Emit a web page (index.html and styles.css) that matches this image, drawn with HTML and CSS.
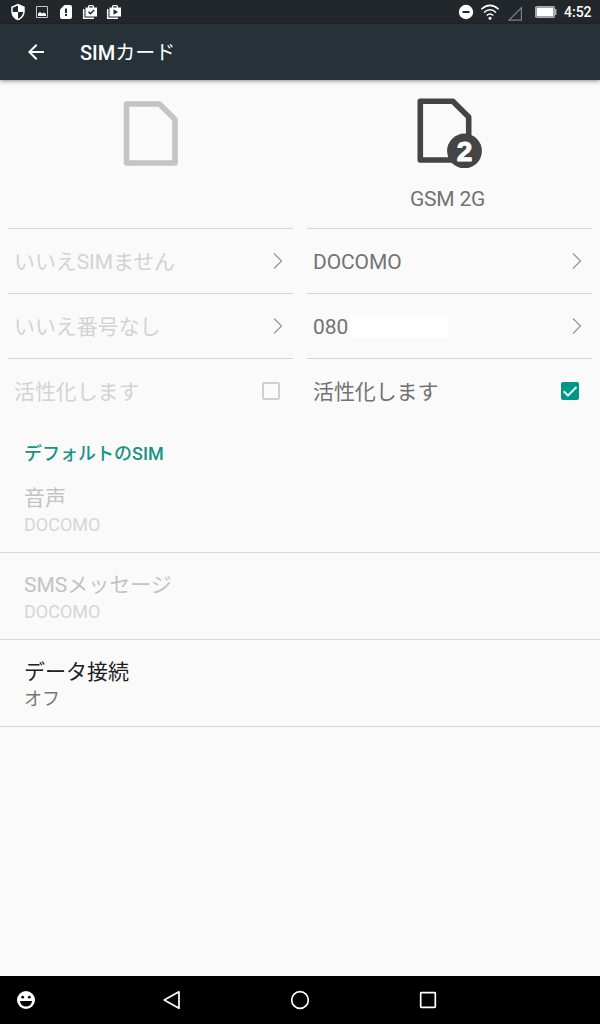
FILE: index.html
```html
<!DOCTYPE html>
<html lang="ja">
<head>
    <meta charset="UTF-8">
    <meta name="viewport" content="width=device-width, initial-scale=1.0">
    <title>SIMカード</title>
    <link rel="stylesheet" href="styles.css">
</head>
<body>
    <div class="status-bar">
        <div class="notifications">
            <svg width="18" height="18" viewBox="0 0 24 24"><path fill="#fff" d="M12 1L3 5v6c0 5.55 3.84 10.74 9 12 5.16-1.26 9-6.45 9-12V5l-9-4zm0 10.99h7c-.53 4.12-3.28 7.79-7 8.94V12H5V6.3l7-3.11v8.8z"/></svg>
            <svg width="14" height="14" viewBox="0 0 14 14"><path fill="none" stroke="#c4c8ca" d="M1.5 1.5h11v11h-11z"/><path fill="#fff" d="M3 11V8.500l2-1.500 2 1.500 2-1 2 1.500v2z"/></svg>
            <svg width="16" height="16" viewBox="0 0 16 16"><path fill="#fff" d="M6.500 1H12a2 2 0 0 1 2 2v10a2 2 0 0 1-2 2H4a2 2 0 0 1-2-2V5.500z"/><path fill="#21272b" d="M7 4.500h2V9H7zM7 10h2v2H7z"/></svg>
            <svg width="16" height="16" viewBox="0 0 16 16"><path fill="none" stroke="#fff" stroke-width="1.500" d="M1.700 5v9.300H12"/><path fill="#fff" fill-rule="evenodd" d="M3.500 3.500H6V2l1-1h4l1 1v1.500h3V12.500H3.500zM7.200 3.500h3.600V2.200H7.200z"/><path fill="none" stroke="#21272b" stroke-width="1.500" d="M6.500 7.700l2 2 3.700-3.700"/></svg>
            <svg width="16" height="16" viewBox="0 0 16 16"><path fill="none" stroke="#fff" stroke-width="1.500" d="M1.700 5v9.300H12"/><path fill="#fff" fill-rule="evenodd" d="M3.500 3.500H6V2l1-1h4l1 1v1.500h3V12.500H3.500zM7.200 3.500h3.600V2.200H7.200z"/><path fill="#21272b" d="M7.500 5.200v5.600L12 8z"/></svg>
        </div>
        <div class="system">
            <svg class="dnd" width="16" height="16" viewBox="0 0 16 16"><circle cx="8" cy="8" r="7.200" fill="#fff"/><path fill="#21272b" d="M4.500 7h7v2h-7z"/></svg>
            <svg class="wifi" width="20" height="17" viewBox="0 0 20 17"><g fill="none" stroke="#fff" stroke-width="1.500"><path d="M1.300 5.200Q10-2.500 18.700 5.200"/><path d="M4 8.500q6-5.400 12 0"/><path d="M6.700 11.500q3.300-3 6.600 0"/></g><circle cx="10" cy="14.300" r="1.500" fill="#fff"/></svg>
            <svg class="signal" width="16" height="16" viewBox="0 0 16 16"><path fill="none" stroke="#7d8284" stroke-width="1.200" d="M2 14.200h12.400V1.800z"/></svg>
            <svg class="battery" width="22" height="12" viewBox="0 0 22 12"><rect x=".6" y=".6" width="18.800" height="10.800" rx="1" fill="none" stroke="#a9adaf" stroke-width="1.200"/><path fill="#fff" d="M1.500 1.500h17v9h-17z"/><path fill="#a9adaf" d="M20 3h1.500v6H20z"/></svg>
            <span class="clock">4:52</span>
        </div>
    </div>

    <header class="app-bar">
        <svg width="24" height="24" viewBox="0 0 24 24"><path fill="#fff" d="M20 11H7.830l5.590-5.590L12 4l-8 8 8 8 1.410-1.410L7.830 13H20v-2z"/></svg>
        <h1>SIM<span class="kana">カード</span></h1>
    </header>

    <main>
        <div class="slots">
            <section class="slot disabled">
                <div class="slot-head">
                    <svg class="sim" width="70" height="76" viewBox="0 0 70 76"><path fill="none" stroke="#c4c4c4" stroke-width="5.600" stroke-linejoin="round" d="M10.500 9h33L59 24.400V68H10.500z"/></svg>
                </div>
                <div class="row">
                    <span class="label">いいえSIMません</span>
                    <svg class="chevron" width="10" height="18" viewBox="0 0 10 18"><path d="M1 1.500L8.500 9 1 16.500"/></svg>
                </div>
                <div class="row">
                    <span class="label">いいえ番号なし</span>
                    <svg class="chevron" width="10" height="18" viewBox="0 0 10 18"><path d="M1 1.500L8.500 9 1 16.500"/></svg>
                </div>
                <div class="row">
                    <span class="label">活性化します</span>
                    <span class="checkbox"></span>
                </div>
            </section>

            <section class="slot">
                <div class="slot-head">
                    <svg class="sim sim-active" width="70" height="76" viewBox="0 0 70 76">
                        <path fill="none" stroke="#444" stroke-width="5.600" stroke-linejoin="round" d="M5.300 9.200h32.500l15.900 15.900V68H5.300z"/>
                        <circle cx="49.500" cy="59" r="17.400" fill="#444"/>
                        <text class="sim-number" x="49.500" y="68.500" text-anchor="middle">2</text>
                    </svg>
                    <span class="network">GSM 2G</span>
                </div>
                <div class="row">
                    <span class="label">DOCOMO</span>
                    <svg class="chevron" width="10" height="18" viewBox="0 0 10 18"><path d="M1 1.500L8.500 9 1 16.500"/></svg>
                </div>
                <div class="row">
                    <span class="number"><span class="label">080</span><i class="mask"></i></span>
                    <svg class="chevron" width="10" height="18" viewBox="0 0 10 18"><path d="M1 1.500L8.500 9 1 16.500"/></svg>
                </div>
                <div class="row">
                    <span class="label">活性化します</span>
                    <span class="checkbox checked">
                        <svg width="18" height="18" viewBox="0 0 18 18"><path fill="none" stroke="#dff6f1" stroke-width="2" d="M2.700 9.200l4.300 4.300 8.500-8.500"/></svg>
                    </span>
                </div>
            </section>
        </div>

        <h2>デフォルトのSIM</h2>
        <div class="pref disabled">
            <div class="title">音声</div>
            <div class="summary">DOCOMO</div>
        </div>
        <div class="pref disabled">
            <div class="title">SMSメッセージ</div>
            <div class="summary">DOCOMO</div>
        </div>
        <div class="pref">
            <div class="title">データ接続</div>
            <div class="summary">オフ</div>
        </div>
    </main>

    <nav class="nav-bar">
        <svg class="face" width="20" height="20" viewBox="0 0 20 20"><circle cx="10" cy="10" r="9" fill="#fff"/><path d="M4 11h12a6 5.600 0 0 1-12 0z"/><circle cx="6.700" cy="7.200" r="1.400"/><circle cx="13.300" cy="7.200" r="1.400"/></svg>
        <svg width="20" height="20" viewBox="0 0 20 20"><path d="M17 1.800v16.400L2.200 10z"/></svg>
        <svg width="20" height="20" viewBox="0 0 20 20"><circle cx="10" cy="10" r="8.300"/></svg>
        <svg width="20" height="20" viewBox="0 0 20 20"><rect x="2.700" y="2.700" width="14.600" height="14.600" rx=".5"/></svg>
    </nav>
</body>
</html>
```
FILE: styles.css
```css
* {
    box-sizing: border-box;
}
body {
    margin: 0;
    height: 1024px;
    display: flex;
    flex-direction: column;
    background-color: #fafafa;
    color: #212121;
    font-family: Roboto, "Noto Sans CJK JP", sans-serif;
    font-size: 21px;
}
svg {
    display: block;
    flex-shrink: 0;
}

/* Status bar */
.status-bar {
    height: 24px;
    background-color: #21272b;
    display: flex;
    justify-content: space-between;
    padding: 0 8px 0 6px;
}
.notifications {
    display: grid;
    grid-template-columns: repeat(5, 24px);
    align-items: center;
    justify-items: center;
}
.system {
    display: flex;
    align-items: center;
}
.wifi {
    margin-left: 6px;
}
.signal {
    margin-left: 7px;
    margin-top: 3px;
}
.battery {
    margin-left: 12px;
}
.clock {
    width: 28px;
    margin-left: 7px;
    color: #fff;
    font-size: 14px;
    font-weight: 500;
    line-height: 24px;
}

/* App bar */
.app-bar {
    height: 56px;
    padding: 0 24px;
    background-color: #263238;
    box-shadow: 0 1px 4px rgba(0, 0, 0, 0.45);
    display: flex;
    align-items: center;
    gap: 32px;
    z-index: 1;
}
h1 {
    margin: 0;
    padding-top: 2px;
    color: #fff;
    font-size: 20px;
    font-weight: 500;
    line-height: 28px;
}
.kana {
    font-weight: 400;
}

/* SIM slots */
main {
    flex: 1;
}
.slots {
    display: grid;
    grid-template-columns: 1fr 1fr;
    gap: 14px;
    padding: 0 8px;
}
.slot {
    color: #737373;
}
.slot-head {
    height: 148px;
    padding-top: 15px;
    display: flex;
    flex-direction: column;
    align-items: center;
}
.sim-active {
    margin-top: -3px;
}
.sim-number {
    fill: #fff;
    stroke: #fff;
    stroke-width: 1px;
    stroke-linejoin: round;
    font-family: "Liberation Sans", Arial, sans-serif;
    font-size: 28px;
    font-weight: 700;
}
.network {
    margin-top: 17px;
    padding-right: 4px;
    line-height: 28px;
    letter-spacing: -0.2px;
}
.row {
    height: 65px;
    padding: 0 10px 0 6px;
    border-top: 1px solid #d8d8d8;
    display: flex;
    align-items: center;
    justify-content: space-between;
    line-height: 30px;
}
.label {
    padding-top: 2px;
    letter-spacing: -0.1px;
}
.slot.disabled .row {
    color: #d3d3d3;
}
.chevron path {
    fill: none;
    stroke: #949494;
    stroke-width: 1.2px;
}
.number {
    display: flex;
    align-items: center;
}
.mask {
    width: 98px;
    height: 23px;
    margin-left: 2px;
    background-color: #fff;
}
.checkbox {
    width: 18px;
    height: 18px;
    margin-right: 3px;
    border: 2px solid #d0d0d0;
    border-radius: 2px;
}
.checkbox.checked {
    border: none;
    background-color: #009688;
}

/* Preferences */
h2 {
    margin: 0;
    padding: 16px 24px 0;
    color: #179485;
    font-size: 18px;
    font-weight: 500;
    line-height: 30px;
}
.pref {
    height: 87px;
    padding: 17px 24px 0;
    border-bottom: 1px solid #d8d8d8;
}
h2 + .pref {
    height: 84px;
    padding-top: 14px;
}
.title {
    line-height: 30px;
}
.summary {
    color: #757575;
    font-size: 18px;
    line-height: 24px;
}
.disabled .title {
    color: #c3c3c3;
}
.disabled .summary {
    color: #d6d6d6;
}

/* Navigation bar */
.nav-bar {
    height: 48px;
    padding: 0 162px 0 16px;
    background-color: #000;
    display: flex;
    align-items: center;
    gap: 108px;
}
.nav-bar svg {
    fill: none;
    stroke: #fff;
    stroke-width: 1.7px;
    stroke-linejoin: round;
}
.nav-bar .face {
    fill: #000;
    stroke: none;
    margin-right: 18px;
}
```
